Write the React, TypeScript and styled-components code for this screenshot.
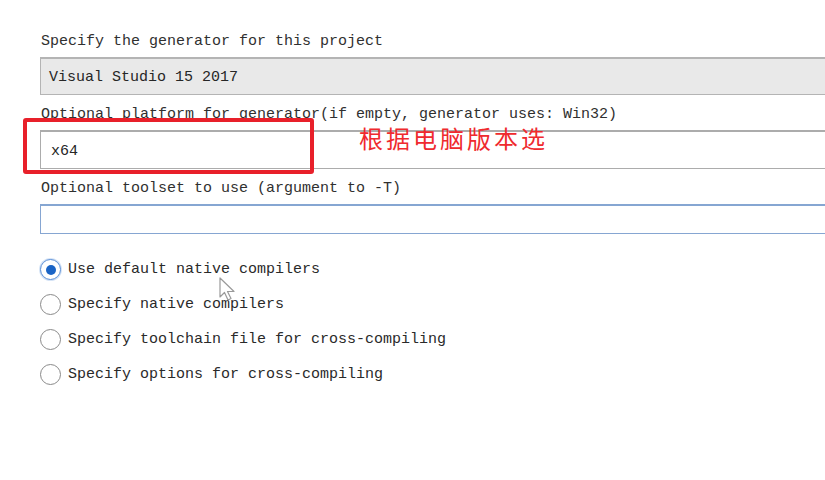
import React from "react";
import styled, { createGlobalStyle } from "styled-components";

const Global = createGlobalStyle`
  html, body { margin: 0; padding: 0; background: #ffffff; overflow: hidden; }
  * { box-sizing: border-box; }
`;

const Page = styled.div`
  position: relative;
  width: 825px;
  height: 480px;
  overflow: hidden;
  background: #ffffff;
  padding: 31px 0 0 40px;
  font-family: "Liberation Mono", "DejaVu Sans Mono", monospace;
  font-size: 15px;
  color: #2a2a2a;
`;

const Form = styled.div`
  display: flex;
  flex-direction: column;
  width: 800px;
`;

const Label = styled.div<{ $first?: boolean }>`
  height: 18px;
  line-height: 22px;
  margin-top: ${(p) => (p.$first ? "0" : "9px")};
  margin-bottom: 8px;
  padding-left: 1px;
  white-space: nowrap;
  color: #303030;
`;

const Field = styled.div<{ $variant: "disabled" | "normal" | "focus"; $h: number }>`
  height: ${(p) => p.$h}px;
  display: flex;
  align-items: center;
  padding: 2px 0 0 ${(p) => (p.$variant === "disabled" ? 8 : 10)}px;
  background: ${(p) => (p.$variant === "disabled" ? "#e9e9e9" : "#ffffff")};
  border: 1px solid
    ${(p) =>
      p.$variant === "disabled" ? "#b4b4b4" : p.$variant === "focus" ? "#86a6d2" : "#acacac"};
  border-top-width: 2px;
  border-right: none;
  color: #262626;
  white-space: nowrap;
`;

const RadioGroup = styled.div`
  display: flex;
  flex-direction: column;
  margin-top: 18px;
`;

const RadioRow = styled.div`
  height: 35px;
  display: flex;
  align-items: center;
  gap: 7px;
  white-space: nowrap;
  color: #2a2a2a;
`;

const RadioCircle = styled.span<{ $checked?: boolean }>`
  width: 21px;
  height: 21px;
  border-radius: 50%;
  flex: none;
  display: flex;
  align-items: center;
  justify-content: center;
  background: #ffffff;
  border: ${(p) => (p.$checked ? "1.5px solid #5c8fd6" : "1.5px solid #8a8a8a")};
  box-shadow: ${(p) => (p.$checked ? "0 0 0 1px #d6e4f6" : "none")};
  &::after {
    content: "";
    display: ${(p) => (p.$checked ? "block" : "none")};
    width: 10px;
    height: 10px;
    border-radius: 50%;
    background: #1a64c6;
  }
`;

const Highlight = styled.div`
  position: absolute;
  left: 23px;
  top: 118px;
  width: 291px;
  height: 56px;
  border: 4px solid #e8202a;
  border-radius: 3px;
`;

const Note = styled.div`
  position: absolute;
  left: 359px;
  top: 123px;
  font-family: "Noto Sans CJK SC", "Noto Sans", sans-serif;
  font-size: 24px;
  line-height: 30px;
  letter-spacing: 3px;
  color: #ef2a2e;
  white-space: nowrap;
`;

const Cursor = styled.svg`
  position: absolute;
  left: 218px;
  top: 277px;
`;

const options = [
  { text: "Use default native compilers", checked: true },
  { text: "Specify native compilers" },
  { text: "Specify toolchain file for cross-compiling" },
  { text: "Specify options for cross-compiling" },
];

export default function App() {
  return (
    <>
      <Global />
      <Page>
        <Form>
          <Label $first>Specify the generator for this project</Label>
          <Field $variant="disabled" $h={38}>Visual Studio 15 2017</Field>
          <Label>Optional platform for generator(if empty, generator uses: Win32)</Label>
          <Field $variant="normal" $h={39}>x64</Field>
          <Label>Optional toolset to use (argument to -T)</Label>
          <Field $variant="focus" $h={30} />
          <RadioGroup>
            {options.map((o) => (
              <RadioRow key={o.text}>
                <RadioCircle $checked={o.checked} />
                {o.text}
              </RadioRow>
            ))}
          </RadioGroup>
        </Form>
        <Highlight />
        <Note>根据电脑版本选</Note>
        <Cursor width="22" height="26" viewBox="0 0 22 26">
          <path
            d="M2 1 L2 20 L6.5 15.5 L10 23 L13 21.5 L9.5 14.5 L16 14.5 Z"
            fill="#ffffff"
            stroke="#9a9a9a"
            strokeWidth="1.2"
            strokeLinejoin="round"
          />
        </Cursor>
      </Page>
    </>
  );
}
